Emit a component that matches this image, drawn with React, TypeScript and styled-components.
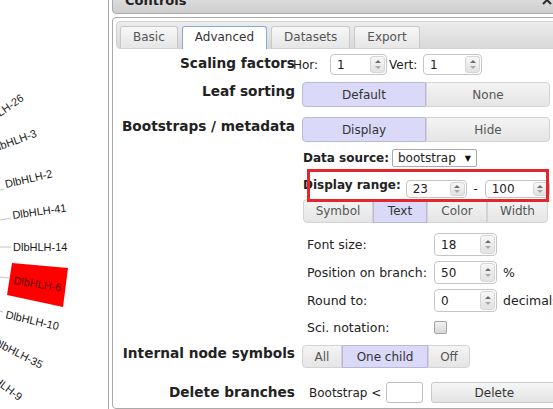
import styled, { createGlobalStyle } from 'styled-components';

const GlobalStyle = createGlobalStyle`
  html, body {
    margin: 0;
    padding: 0;
    background: #fff;
  }
  body {
    font-family: "DejaVu Sans", Verdana, sans-serif;
    font-size: 12px;
    color: #333;
  }
`;

const Page = styled.div`
  width: 553px;
  height: 409px;
  overflow: hidden;
  display: flex;
  background: #fff;
`;

const TreePane = styled.div`
  width: 108px;
  height: 409px;
  flex: none;

  svg {
    display: block;
    overflow: visible;
  }
`;

const Dialog = styled.div`
  flex: none;
  width: 450px;
  margin-top: -10px;
  border-left: 1px solid #a8a8a8;
  padding-left: 3px;
  display: flex;
  flex-direction: column;
  gap: 3px;
`;

const TitleBar = styled.div`
  height: 22px;
  border: 1px solid #aaa;
  border-radius: 4px;
  background: linear-gradient(#e4e4e4, #cecece);
  display: flex;
  justify-content: space-between;
  align-items: flex-start;
  padding: 0 9px 0 12px;
  font-weight: bold;
  font-size: 13px;
  line-height: 20px;
  color: #222;

  svg {
    margin-top: 4px;
  }
`;

const TabsWidget = styled.div`
  flex: 1;
  border: 1px solid #aaa;
  border-radius: 4px;
  padding: 3px;
  background: #fff;
`;

const TabNav = styled.div`
  height: 22px;
  padding: 4px 3px 0;
  border: 1px solid #d3d3d3;
  border-radius: 4px;
  background: linear-gradient(#ececec, #d9d9d9);
  display: flex;
  align-items: flex-end;
  gap: 4px;
`;

const Tab = styled.div<{ $active?: boolean }>`
  height: ${({ $active }) => ($active ? '22px' : '21px')};
  margin-bottom: ${({ $active }) => ($active ? '-1px' : '0')};
  padding: 0 12px;
  line-height: 20px;
  font-size: 12px;
  border: 1px solid ${({ $active }) => ($active ? '#86aad8' : '#c8c8c8')};
  border-bottom: 0;
  border-radius: 3px 3px 0 0;
  background: ${({ $active }) => ($active ? '#fff' : 'linear-gradient(#f7f7f7, #e6e6e6)')};
  color: ${({ $active }) => ($active ? '#333' : '#555')};
`;

const Content = styled.div`
  padding-top: 5px;
  display: flex;
  flex-direction: column;
`;

const Row = styled.div<{ $mt: number }>`
  display: flex;
  align-items: flex-start;
  margin-top: ${({ $mt }) => $mt}px;
`;

const RowLabel = styled.div<{ $pt?: number }>`
  width: 179px;
  flex: none;
  text-align: right;
  font-weight: bold;
  font-size: 13.7px;
  line-height: 16px;
  color: #222;
  white-space: nowrap;
  padding-top: ${({ $pt }) => $pt ?? 0}px;
`;

const Controls = styled.div<{ $offset: number }>`
  margin-left: ${({ $offset }) => $offset}px;
  display: flex;
  flex-direction: column;
`;

const Inline = styled.div<{ $h: number }>`
  display: flex;
  align-items: center;
  height: ${({ $h }) => $h}px;
`;

const FieldLabel = styled.span<{ $w?: number; $ml?: number }>`
  width: ${({ $w }) => ($w ? `${$w}px` : 'auto')};
  margin-left: ${({ $ml }) => $ml ?? 0}px;
  font-size: 12px;
  color: #222;
  flex: none;
`;

const SpinnerBox = styled.div<{ $w: number; $h: number }>`
  box-sizing: border-box;
  width: ${({ $w }) => $w}px;
  height: ${({ $h }) => $h}px;
  flex: none;
  border: 1px solid #c5c5c5;
  border-radius: 4px;
  background: #fff;
  display: flex;
  align-items: stretch;
`;

const SpinnerValue = styled.div`
  flex: 1;
  padding-left: 6px;
  display: flex;
  align-items: center;
  font-size: 12px;
  color: #222;
`;

const SpinnerButtons = styled.div`
  width: 13px;
  margin: 1px;
  border: 1px solid #d6d6d6;
  border-radius: 3px;
  background: linear-gradient(#f7f7f7, #e2e2e2);
  display: flex;
  flex-direction: column;
  align-items: center;
  justify-content: space-evenly;
`;

const Arrow = styled.span<{ $down?: boolean }>`
  width: 0;
  height: 0;
  border-left: 3px solid transparent;
  border-right: 3px solid transparent;
  ${({ $down }) => ($down ? 'border-top: 3px solid #a8a8a8;' : 'border-bottom: 3px solid #6e6e6e;')}
`;

const Segmented = styled.div`
  display: flex;
`;

const SegButton = styled.div<{ $on?: boolean; $w: number; $h: number }>`
  box-sizing: border-box;
  width: ${({ $w }) => $w}px;
  height: ${({ $h }) => $h}px;
  display: flex;
  align-items: center;
  justify-content: center;
  font-size: 12px;
  color: ${({ $on }) => ($on ? '#333' : '#555')};
  border: 1px solid ${({ $on }) => ($on ? '#b9b9d6' : '#d3d3d3')};
  background: ${({ $on }) => ($on ? '#dadaf8' : 'linear-gradient(#f4f4f4, #e5e5e5)')};

  &:first-child {
    border-radius: 4px 0 0 4px;
  }
  &:last-child {
    border-radius: 0 4px 4px 0;
  }
`;

const Details = styled.div`
  position: relative;
  padding-left: 1px;
  display: flex;
  flex-direction: column;
`;

const SourceRow = styled.div`
  margin-top: 7px;
  height: 18px;
  display: flex;
  align-items: center;
  gap: 3px;
`;

const BoldText = styled.span<{ $lift?: number }>`
  font-weight: bold;
  font-size: 12px;
  color: #222;
  margin-bottom: ${({ $lift }) => ($lift ?? 0) * 2}px;
`;

const Select = styled.div`
  box-sizing: border-box;
  width: 85px;
  height: 18px;
  border: 1px solid #a9a9a9;
  border-radius: 2px;
  padding: 0 5px;
  display: flex;
  align-items: center;
  justify-content: space-between;
  font-size: 12px;
  color: #222;

  span {
    font-size: 8px;
    color: #111;
  }
`;

const RangeRow = styled.div`
  position: relative;
  margin-top: 13px;
  height: 18px;
  display: flex;
  align-items: center;
  gap: 5px;
`;

const Dash = styled.span`
  width: 8px;
  text-align: center;
  font-size: 12px;
  color: #222;
`;

const Highlight = styled.div`
  position: absolute;
  left: 4px;
  top: -11px;
  width: 242px;
  height: 33px;
  box-sizing: border-box;
  border: 3px solid #e5262c;
  z-index: 2;
`;

const EdgeShade = styled.div`
  position: absolute;
  right: -8px;
  top: 120px;
  width: 11px;
  height: 26px;
  border-radius: 5px;
  background: linear-gradient(90deg, #f0f0f0, #d6d6d6);
`;

const SubTabs = styled.div`
  margin-top: 1px;
  display: flex;
`;

const OptionRow = styled.div<{ $mt: number; $h: number }>`
  margin-top: ${({ $mt }) => $mt}px;
  height: ${({ $h }) => $h}px;
  padding-left: 4px;
  display: flex;
  align-items: center;
`;

const OptionLabel = styled.span`
  width: 127px;
  flex: none;
  font-size: 12.5px;
  color: #222;
`;

const Unit = styled.span`
  margin-left: 6px;
  font-size: 12.5px;
  color: #222;
  white-space: nowrap;
`;

const Checkbox = styled.span`
  width: 11px;
  height: 11px;
  border: 1px solid #a3a3a3;
  border-radius: 2px;
  background: linear-gradient(#f2f2f2, #d6d6d6);
`;

const TextBox = styled.div`
  box-sizing: border-box;
  width: 37px;
  height: 21px;
  margin-left: 5px;
  border: 1px solid #bdbdbd;
  border-radius: 3px;
  background: #fff;
`;

const PushButton = styled.div`
  box-sizing: border-box;
  width: 130px;
  height: 21px;
  margin-left: 8px;
  border: 1px solid #c9c9c9;
  border-radius: 3px;
  background: linear-gradient(#f6f6f6, #e3e3e3);
  display: flex;
  align-items: center;
  justify-content: center;
  font-size: 12px;
  color: #333;
`;

type SpinnerProps = { value: string; w: number; h: number };

const Spinner = ({ value, w, h }: SpinnerProps) => (
  <SpinnerBox $w={w} $h={h}>
    <SpinnerValue>{value}</SpinnerValue>
    <SpinnerButtons>
      <Arrow />
      <Arrow $down />
    </SpinnerButtons>
  </SpinnerBox>
);

const leaves = [
  { name: 'DlbHLH-26', x: -20, y: 131, a: -35 },
  { name: 'DlbHLH-3', x: -8, y: 153, a: -20 },
  { name: 'DlbHLH-2', x: 6, y: 188, a: -13 },
  { name: 'DlbHLH-41', x: 13, y: 219, a: -8 },
  { name: 'DlbHLH-14', x: 13, y: 251, a: 0 },
  { name: 'DlbHLH-10', x: 5, y: 318, a: 13 },
  { name: 'DlbHLH-35', x: -8, y: 344, a: 27 },
  { name: 'DlbHLH-9', x: -20, y: 372, a: 37 },
];

const branches = [
  [0, 190, 4, 189],
  [0, 220, 11, 218],
  [0, 247, 11, 247],
  [0, 277, 9, 278],
  [0, 311, 3, 312],
];

const Tree = () => (
  <svg width="108" height="409" viewBox="0 0 108 409">
    {branches.map(([x1, y1, x2, y2], i) => (
      <line key={i} x1={x1} y1={y1} x2={x2} y2={y2} stroke="#c4c4c4" strokeWidth="1" />
    ))}
    <polygon points="12,263 68,268 63,307 7,295" fill="#ff0000" />
    <text
      x="13"
      y="284"
      transform="rotate(9 13 284)"
      fontFamily="'Liberation Sans', Arial, sans-serif"
      fontSize="11"
      fill="#5a0b0b"
    >
      DlbHLH-6
    </text>
    {leaves.map((l) => (
      <text
        key={l.name}
        x={l.x}
        y={l.y}
        transform={`rotate(${l.a} ${l.x} ${l.y})`}
        fontFamily="'Liberation Sans', Arial, sans-serif"
        fontSize="11"
        fill="#1a1a1a"
      >
        {l.name}
      </text>
    ))}
  </svg>
);

const CloseIcon = () => (
  <svg width="10" height="10" viewBox="0 0 10 10">
    <path d="M1 1 L9 9 M9 1 L1 9" stroke="#2a2a2a" strokeWidth="2" />
  </svg>
);

const App = () => (
  <Page>
    <GlobalStyle />
    <TreePane>
      <Tree />
    </TreePane>
    <Dialog>
      <TitleBar>
        <span>Controls</span>
        <CloseIcon />
      </TitleBar>
      <TabsWidget>
        <TabNav>
          <Tab>Basic</Tab>
          <Tab $active>Advanced</Tab>
          <Tab>Datasets</Tab>
          <Tab>Export</Tab>
        </TabNav>
        <Content>
          <Row $mt={0}>
            <RowLabel $pt={1}>Scaling factors</RowLabel>
            <Controls $offset={-2}>
              <Inline $h={21}>
                <FieldLabel $w={37}>Hor:</FieldLabel>
                <Spinner value="1" w={57} h={21} />
                <FieldLabel $w={34} $ml={2}>Vert:</FieldLabel>
                <Spinner value="1" w={59} h={21} />
              </Inline>
            </Controls>
          </Row>

          <Row $mt={7}>
            <RowLabel $pt={1}>Leaf sorting</RowLabel>
            <Controls $offset={7}>
              <Segmented>
                <SegButton $on $w={124} $h={25}>Default</SegButton>
                <SegButton $w={124} $h={25}>None</SegButton>
              </Segmented>
            </Controls>
          </Row>

          <Row $mt={10}>
            <RowLabel $pt={1}>Bootstraps / metadata</RowLabel>
            <Controls $offset={7}>
              <Segmented>
                <SegButton $on $w={124} $h={25}>Display</SegButton>
                <SegButton $w={124} $h={25}>Hide</SegButton>
              </Segmented>
              <Details>
                <SourceRow>
                  <BoldText>Data source:</BoldText>
                  <Select>
                    bootstrap <span>▼</span>
                  </Select>
                </SourceRow>
                <RangeRow>
                  <BoldText $lift={4}>Display range:</BoldText>
                  <Spinner value="23" w={61} h={18} />
                  <Dash>-</Dash>
                  <Spinner value="100" w={65} h={18} />
                  <Highlight />
                </RangeRow>
                <SubTabs>
                  <SegButton $w={70} $h={24}>Symbol</SegButton>
                  <SegButton $on $w={54} $h={24}>Text</SegButton>
                  <SegButton $w={60} $h={24}>Color</SegButton>
                  <SegButton $w={61} $h={24}>Width</SegButton>
                </SubTabs>
                <OptionRow $mt={10} $h={23}>
                  <OptionLabel>Font size:</OptionLabel>
                  <Spinner value="18" w={63} h={23} />
                </OptionRow>
                <OptionRow $mt={5} $h={23}>
                  <OptionLabel>Position on branch:</OptionLabel>
                  <Spinner value="50" w={63} h={23} />
                  <Unit>%</Unit>
                </OptionRow>
                <OptionRow $mt={5} $h={23}>
                  <OptionLabel>Round to:</OptionLabel>
                  <Spinner value="0" w={63} h={23} />
                  <Unit>decimals</Unit>
                </OptionRow>
                <OptionRow $mt={5} $h={20}>
                  <OptionLabel>Sci. notation:</OptionLabel>
                  <Checkbox />
                </OptionRow>
                <EdgeShade />
              </Details>
            </Controls>
          </Row>

          <Row $mt={8}>
            <RowLabel>Internal node symbols</RowLabel>
            <Controls $offset={7}>
              <Segmented>
                <SegButton $w={40} $h={23}>All</SegButton>
                <SegButton $on $w={86} $h={23}>One child</SegButton>
                <SegButton $w={42} $h={23}>Off</SegButton>
              </Segmented>
            </Controls>
          </Row>

          <Row $mt={14}>
            <RowLabel $pt={2}>Delete branches</RowLabel>
            <Controls $offset={14}>
              <Inline $h={21}>
                <FieldLabel>Bootstrap &lt;</FieldLabel>
                <TextBox />
                <PushButton>Delete</PushButton>
              </Inline>
            </Controls>
          </Row>
        </Content>
      </TabsWidget>
    </Dialog>
  </Page>
);

export default App;
